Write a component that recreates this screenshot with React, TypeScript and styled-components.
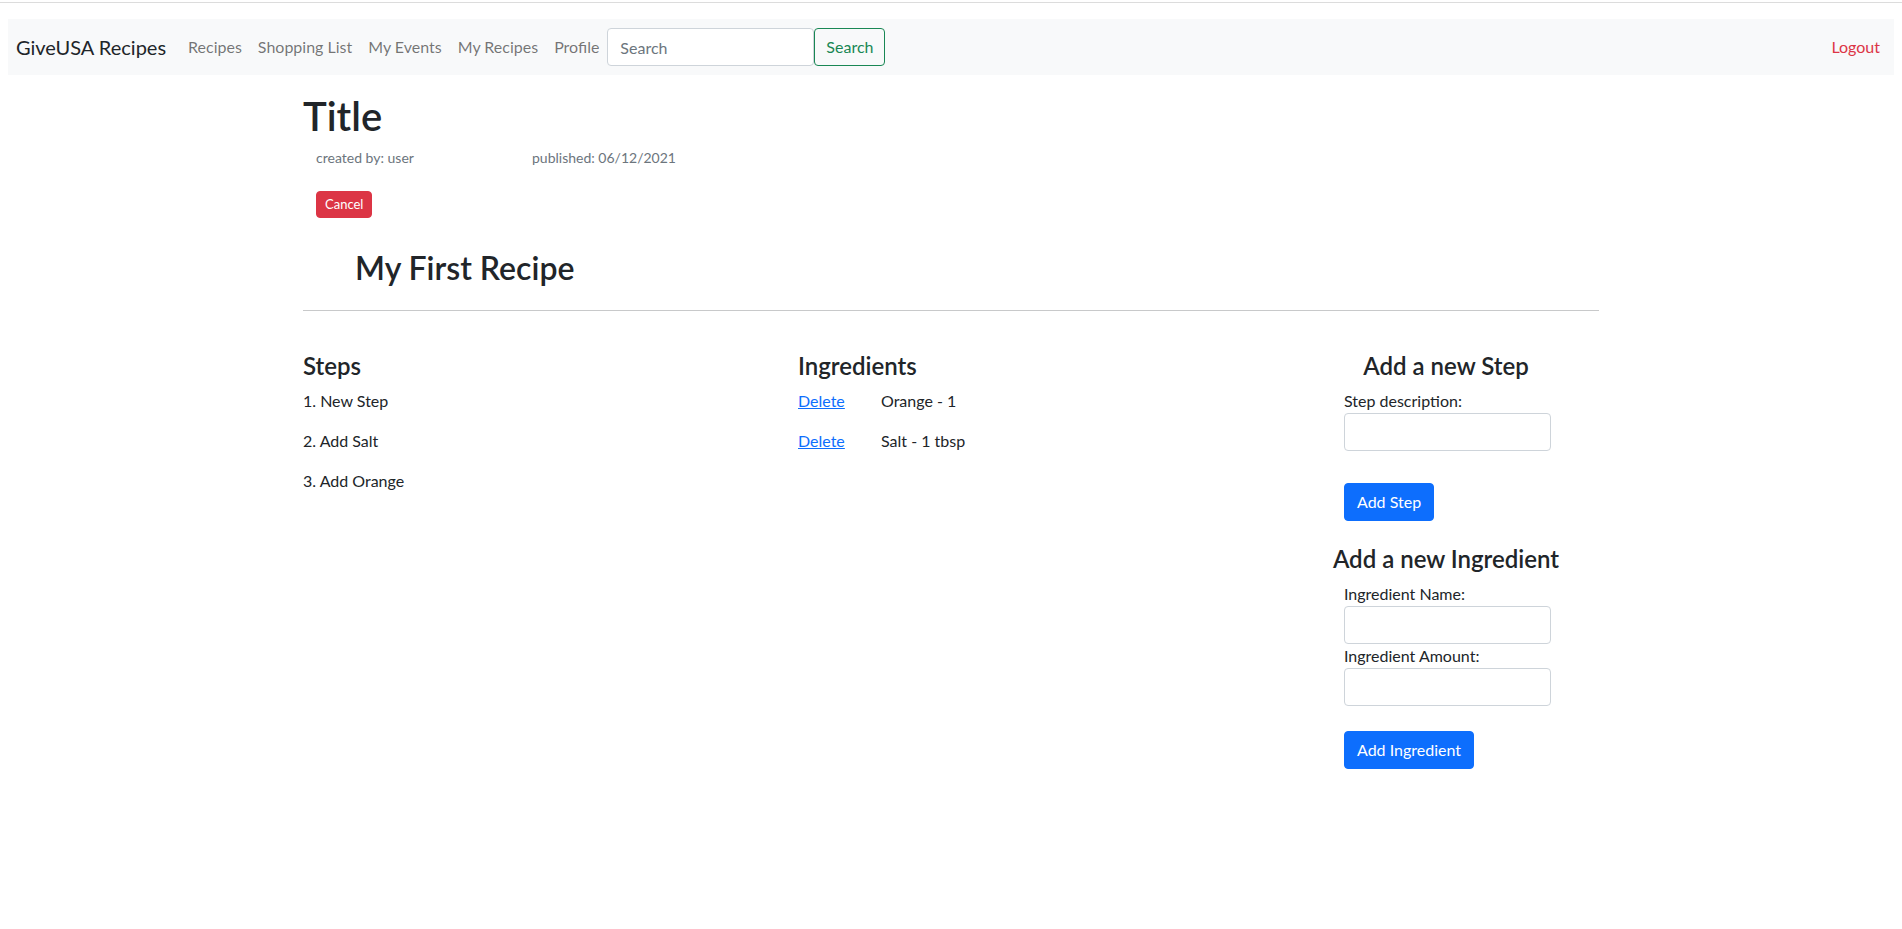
import React from "react";
import styled, { createGlobalStyle } from "styled-components";

const GlobalStyle = createGlobalStyle`
  *, *::before, *::after { box-sizing: border-box; }
  body {
    margin: 0;
    font-family: Lato, "Noto Sans", "Liberation Sans", sans-serif;
    font-size: 16px;
    line-height: 1.5;
    color: #212529;
    background: #fff;
  }
`;

const TopRule = styled.div`
  height: 1px;
  margin-top: 2px;
  background: #dcdcdc;
`;

const Navbar = styled.nav`
  margin: 16px 8px 0;
  padding: 8px 6px 8px 8px;
  background: #f8f9fa;
  display: flex;
  align-items: center;
  height: 56px;
`;

const Brand = styled.a`
  font-size: 20px;
  line-height: 30px;
  color: #212529;
  text-decoration: none;
  margin-right: 14px;
`;

const NavLink = styled.a<{ $danger?: boolean }>`
  padding: 8px;
  font-size: 16px;
  line-height: 24px;
  color: ${(p) => (p.$danger ? "#dc3545" : "rgba(0, 0, 0, 0.55)")};
  text-decoration: none;
`;

const SearchForm = styled.form`
  display: flex;
  align-items: center;
`;

const SearchInput = styled.input`
  width: 207px;
  height: 38px;
  padding: 6px 12px;
  font: inherit;
  font-size: 16px;
  color: #212529;
  background: #fff;
  border: 1px solid #ced4da;
  border-radius: 4px;
  &::placeholder { color: #6c757d; }
`;

const OutlineButton = styled.button`
  height: 38px;
  padding: 6px 11px;
  font: inherit;
  font-size: 16px;
  color: #198754;
  background: transparent;
  border: 1px solid #198754;
  border-radius: 4px;
`;

const Spacer = styled.div`
  flex: 1;
`;

const Container = styled.main`
  max-width: 1320px;
  margin: 0 auto;
  padding: 0 12px;
`;

const Title = styled.h1`
  margin: 17px 0 7px;
  font-size: 40px;
  font-weight: 600;
  line-height: 48px;
`;

const MetaRow = styled.div`
  display: flex;
  padding-left: 13px;
  font-size: 14px;
  line-height: 21px;
  color: #6c757d;
`;

const MetaItem = styled.span<{ $width?: number }>`
  width: ${(p) => (p.$width ? `${p.$width}px` : "auto")};
`;

const SmallButton = styled.button`
  display: block;
  margin: 23px 0 0 13px;
  padding: 3px 8px;
  font: inherit;
  font-size: 13px;
  line-height: 19px;
  color: #fff;
  background: #dc3545;
  border: 1px solid #dc3545;
  border-radius: 4px;
`;

const RecipeName = styled.h2`
  margin: 31px 0 0 52px;
  font-size: 32px;
  font-weight: 600;
  line-height: 38.4px;
`;

const Divider = styled.hr`
  margin: 23px 0 0;
  border: 0;
  border-top: 1px solid #c8c9ca;
`;

const Columns = styled.div`
  display: grid;
  grid-template-columns: 471fr 471fr 306fr;
  column-gap: 24px;
  padding-top: 41px;
`;

const Section = styled.section``;

const SectionHeading = styled.h4<{ $center?: boolean; $top?: number }>`
  margin: ${(p) => p.$top ?? 0}px 0 8px;
  font-size: 24px;
  font-weight: 600;
  line-height: 28.8px;
  text-align: ${(p) => (p.$center ? "center" : "left")};
`;

const Item = styled.p`
  margin: 0 0 16px;
  line-height: 24px;
`;

const IngredientRow = styled.div`
  display: grid;
  grid-template-columns: 83px auto;
  margin-bottom: 16px;
  line-height: 24px;
`;

const DeleteLink = styled.a`
  color: #0d6efd;
  text-decoration: underline;
  justify-self: start;
`;

const Form = styled.form`
  width: 207px;
  margin-left: 51px;
`;

const Label = styled.label`
  display: block;
  line-height: 24px;
`;

const TextInput = styled.input`
  display: block;
  width: 207px;
  height: 38px;
  padding: 6px 12px;
  font: inherit;
  border: 1px solid #ced4da;
  border-radius: 4px;
`;

const PrimaryButton = styled.button<{ $top: number }>`
  display: inline-block;
  margin-top: ${(p) => p.$top}px;
  padding: 6px 12px;
  font: inherit;
  font-size: 16px;
  line-height: 24px;
  color: #fff;
  background: #0d6efd;
  border: 1px solid #0d6efd;
  border-radius: 4px;
`;

const steps = ["New Step", "Add Salt", "Add Orange"];
const ingredients = ["Orange - 1", "Salt - 1 tbsp"];

export default function App() {
  return (
    <>
      <GlobalStyle />
      <TopRule />
      <Navbar>
        <Brand href="#">GiveUSA Recipes</Brand>
        <NavLink href="#">Recipes</NavLink>
        <NavLink href="#">Shopping List</NavLink>
        <NavLink href="#">My Events</NavLink>
        <NavLink href="#">My Recipes</NavLink>
        <NavLink href="#">Profile</NavLink>
        <SearchForm onSubmit={(e) => e.preventDefault()}>
          <SearchInput placeholder="Search" />
          <OutlineButton type="submit">Search</OutlineButton>
        </SearchForm>
        <Spacer />
        <NavLink href="#" $danger>
          Logout
        </NavLink>
      </Navbar>
      <Container>
        <Title>Title</Title>
        <MetaRow>
          <MetaItem $width={216}>created by: user</MetaItem>
          <MetaItem>published: 06/12/2021</MetaItem>
        </MetaRow>
        <SmallButton>Cancel</SmallButton>
        <RecipeName>My First Recipe</RecipeName>
        <Divider />
        <Columns>
          <Section>
            <SectionHeading>Steps</SectionHeading>
            {steps.map((s, i) => (
              <Item key={s}>
                {i + 1}. {s}
              </Item>
            ))}
          </Section>
          <Section>
            <SectionHeading>Ingredients</SectionHeading>
            {ingredients.map((ing) => (
              <IngredientRow key={ing}>
                <DeleteLink href="#">Delete</DeleteLink>
                <span>{ing}</span>
              </IngredientRow>
            ))}
          </Section>
          <Section>
            <SectionHeading $center>Add a new Step</SectionHeading>
            <Form onSubmit={(e) => e.preventDefault()}>
              <Label>Step description:</Label>
              <TextInput />
              <PrimaryButton $top={32}>Add Step</PrimaryButton>
            </Form>
            <SectionHeading $center $top={24}>
              Add a new Ingredient
            </SectionHeading>
            <Form onSubmit={(e) => e.preventDefault()}>
              <Label>Ingredient Name:</Label>
              <TextInput />
              <Label>Ingredient Amount:</Label>
              <TextInput />
              <PrimaryButton $top={25}>Add Ingredient</PrimaryButton>
            </Form>
          </Section>
        </Columns>
      </Container>
    </>
  );
}
